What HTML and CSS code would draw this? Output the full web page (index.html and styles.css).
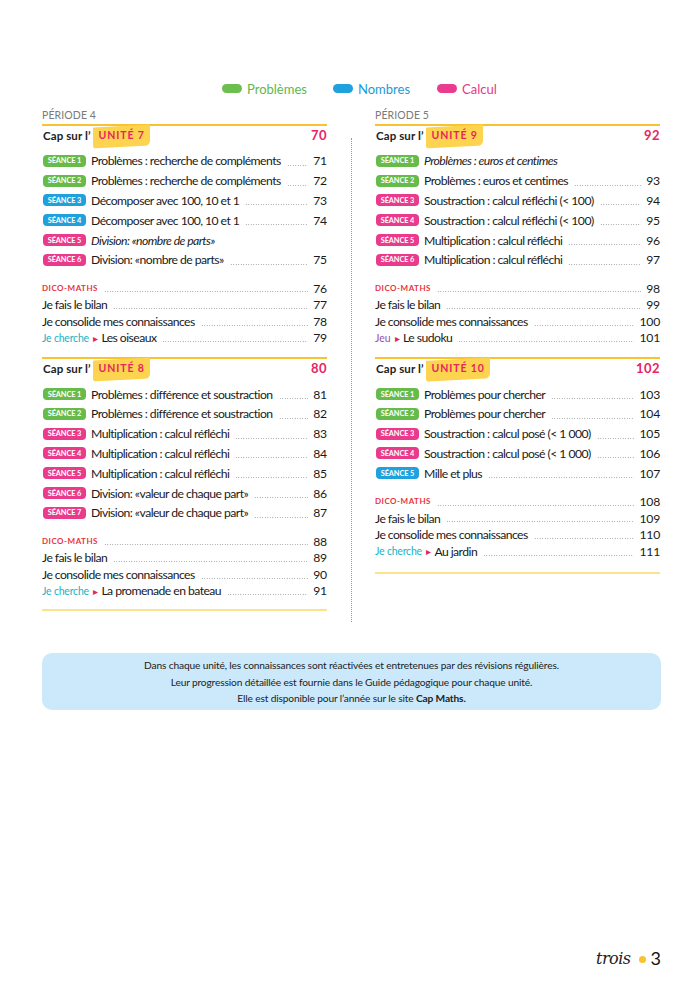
FILE: index.html
```html
<!DOCTYPE html>
<html lang="fr">
<head>
<meta charset="utf-8">
<title>Sommaire</title>
<link rel="stylesheet" href="styles.css">
</head>
<body>
<div class="page">
  <div class="legend">
    <span class="leg leg-green"><i class="pill"></i>Problèmes</span>
    <span class="leg leg-blue"><i class="pill"></i>Nombres</span>
    <span class="leg leg-pink"><i class="pill"></i>Calcul</span>
  </div>

  <div class="columns">
    <div class="col">
      <div class="period">PÉRIODE 4</div>
      <div class="unit">
        <div class="unit-head"><span class="cap">Cap sur l’</span><span class="unit-tag">UNITÉ 7</span><span class="unit-num">70</span></div>
        <ul class="seances">
          <li class="row"><span class="badge green">SÉANCE 1</span><span class="title">Problèmes : recherche de compléments</span><span class="dots"></span><span class="num">71</span></li>
          <li class="row"><span class="badge green">SÉANCE 2</span><span class="title">Problèmes : recherche de compléments</span><span class="dots"></span><span class="num">72</span></li>
          <li class="row"><span class="badge blue">SÉANCE 3</span><span class="title">Décomposer avec 100, 10 et 1</span><span class="dots"></span><span class="num">73</span></li>
          <li class="row"><span class="badge blue">SÉANCE 4</span><span class="title">Décomposer avec 100, 10 et 1</span><span class="dots"></span><span class="num">74</span></li>
          <li class="row"><span class="badge pink">SÉANCE 5</span><span class="title it">Division: «nombre de parts»</span></li>
          <li class="row"><span class="badge pink">SÉANCE 6</span><span class="title">Division: «nombre de parts»</span><span class="dots"></span><span class="num">75</span></li>
        </ul>
        <ul class="extras">
          <li class="row"><span class="dico">DICO-MATHS</span><span class="dots"></span><span class="num">76</span></li>
          <li class="row"><span class="title">Je fais le bilan</span><span class="dots"></span><span class="num">77</span></li>
          <li class="row"><span class="title">Je consolide mes connaissances</span><span class="dots"></span><span class="num">78</span></li>
          <li class="row"><span class="cherche">Je cherche</span><span class="arrow">▸</span><span class="title">Les oiseaux</span><span class="dots"></span><span class="num">79</span></li>
        </ul>
      </div>
      <div class="unit">
        <div class="unit-head"><span class="cap">Cap sur l’</span><span class="unit-tag">UNITÉ 8</span><span class="unit-num">80</span></div>
        <ul class="seances">
          <li class="row"><span class="badge green">SÉANCE 1</span><span class="title">Problèmes : différence et soustraction</span><span class="dots"></span><span class="num">81</span></li>
          <li class="row"><span class="badge green">SÉANCE 2</span><span class="title">Problèmes : différence et soustraction</span><span class="dots"></span><span class="num">82</span></li>
          <li class="row"><span class="badge pink">SÉANCE 3</span><span class="title">Multiplication : calcul réfléchi</span><span class="dots"></span><span class="num">83</span></li>
          <li class="row"><span class="badge pink">SÉANCE 4</span><span class="title">Multiplication : calcul réfléchi</span><span class="dots"></span><span class="num">84</span></li>
          <li class="row"><span class="badge pink">SÉANCE 5</span><span class="title">Multiplication : calcul réfléchi</span><span class="dots"></span><span class="num">85</span></li>
          <li class="row"><span class="badge pink">SÉANCE 6</span><span class="title">Division: «valeur de chaque part»</span><span class="dots"></span><span class="num">86</span></li>
          <li class="row"><span class="badge pink">SÉANCE 7</span><span class="title">Division: «valeur de chaque part»</span><span class="dots"></span><span class="num">87</span></li>
        </ul>
        <ul class="extras">
          <li class="row"><span class="dico">DICO-MATHS</span><span class="dots"></span><span class="num">88</span></li>
          <li class="row"><span class="title">Je fais le bilan</span><span class="dots"></span><span class="num">89</span></li>
          <li class="row"><span class="title">Je consolide mes connaissances</span><span class="dots"></span><span class="num">90</span></li>
          <li class="row"><span class="cherche">Je cherche</span><span class="arrow">▸</span><span class="title">La promenade en bateau</span><span class="dots"></span><span class="num">91</span></li>
        </ul>
      </div>
      <div class="end-line"></div>
    </div>

    <div class="divider"></div>

    <div class="col">
      <div class="period">PÉRIODE 5</div>
      <div class="unit">
        <div class="unit-head"><span class="cap">Cap sur l’</span><span class="unit-tag">UNITÉ 9</span><span class="unit-num">92</span></div>
        <ul class="seances">
          <li class="row"><span class="badge green">SÉANCE 1</span><span class="title it">Problèmes : euros et centimes</span></li>
          <li class="row"><span class="badge green">SÉANCE 2</span><span class="title">Problèmes : euros et centimes</span><span class="dots"></span><span class="num">93</span></li>
          <li class="row"><span class="badge pink">SÉANCE 3</span><span class="title">Soustraction : calcul réfléchi (&lt; 100)</span><span class="dots"></span><span class="num">94</span></li>
          <li class="row"><span class="badge pink">SÉANCE 4</span><span class="title">Soustraction : calcul réfléchi (&lt; 100)</span><span class="dots"></span><span class="num">95</span></li>
          <li class="row"><span class="badge pink">SÉANCE 5</span><span class="title">Multiplication : calcul réfléchi</span><span class="dots"></span><span class="num">96</span></li>
          <li class="row"><span class="badge pink">SÉANCE 6</span><span class="title">Multiplication : calcul réfléchi</span><span class="dots"></span><span class="num">97</span></li>
        </ul>
        <ul class="extras">
          <li class="row"><span class="dico">DICO-MATHS</span><span class="dots"></span><span class="num">98</span></li>
          <li class="row"><span class="title">Je fais le bilan</span><span class="dots"></span><span class="num">99</span></li>
          <li class="row"><span class="title">Je consolide mes connaissances</span><span class="dots"></span><span class="num">100</span></li>
          <li class="row"><span class="jeu">Jeu</span><span class="arrow">▸</span><span class="title">Le sudoku</span><span class="dots"></span><span class="num">101</span></li>
        </ul>
      </div>
      <div class="unit">
        <div class="unit-head"><span class="cap">Cap sur l’</span><span class="unit-tag">UNITÉ 10</span><span class="unit-num">102</span></div>
        <ul class="seances">
          <li class="row"><span class="badge green">SÉANCE 1</span><span class="title">Problèmes pour chercher</span><span class="dots"></span><span class="num">103</span></li>
          <li class="row"><span class="badge green">SÉANCE 2</span><span class="title">Problèmes pour chercher</span><span class="dots"></span><span class="num">104</span></li>
          <li class="row"><span class="badge pink">SÉANCE 3</span><span class="title">Soustraction : calcul posé (&lt; 1 000)</span><span class="dots"></span><span class="num">105</span></li>
          <li class="row"><span class="badge pink">SÉANCE 4</span><span class="title">Soustraction : calcul posé (&lt; 1 000)</span><span class="dots"></span><span class="num">106</span></li>
          <li class="row"><span class="badge blue">SÉANCE 5</span><span class="title">Mille et plus</span><span class="dots"></span><span class="num">107</span></li>
        </ul>
        <ul class="extras">
          <li class="row"><span class="dico">DICO-MATHS</span><span class="dots"></span><span class="num">108</span></li>
          <li class="row"><span class="title">Je fais le bilan</span><span class="dots"></span><span class="num">109</span></li>
          <li class="row"><span class="title">Je consolide mes connaissances</span><span class="dots"></span><span class="num">110</span></li>
          <li class="row"><span class="cherche">Je cherche</span><span class="arrow">▸</span><span class="title">Au jardin</span><span class="dots"></span><span class="num">111</span></li>
        </ul>
      </div>
      <div class="end-line"></div>
    </div>
  </div>

  <div class="info">
    <p>Dans chaque unité, les connaissances sont réactivées et entretenues par des révisions régulières.</p>
    <p>Leur progression détaillée est fournie dans le Guide pédagogique pour chaque unité.</p>
    <p>Elle est disponible pour l’année sur le site <b>Cap Maths.</b></p>
  </div>

  <div class="folio"><span class="word">trois</span><span class="dot"></span><span class="pnum">3</span></div>
</div>
</body>
</html>
```

FILE: styles.css
```css
* { box-sizing: border-box; }
html, body { margin: 0; padding: 0; background: #fff; }
body {
  font-family: "Lato", "Open Sans", sans-serif;
  color: #222;
  width: 700px;
  height: 990px;
  overflow: hidden;
}
.page { padding: 81px 0 0 0; }

.legend {
  display: flex;
  justify-content: flex-start;
  padding-left: 222px;
  height: 15px;
  align-items: center;
  font-size: 13px;
}
.leg { display: inline-flex; align-items: center; }
.leg .pill {
  display: inline-block;
  width: 20px;
  height: 9px;
  border-radius: 5px;
  margin-right: 5px;
}
.leg-green { color: #5fb84a; width: 111px; }
.leg-green .pill { background: #6cbf4f; }
.leg-blue { color: #1a9ad8; width: 104px; }
.leg-blue .pill { background: #1ea1dc; }
.leg-pink { color: #e8358b; }
.leg-pink .pill { background: #ea3c8e; }

.columns {
  display: grid;
  grid-template-columns: 285px 48px 285px;
  align-items: start;
  padding-left: 42px;
  margin-top: 12px;
}
.divider {
  margin: 30px auto 0;
  width: 0;
  height: 484px;
  border-left: 1px dotted #9a9a9a;
}
.period {
  font-size: 10.5px;
  line-height: 14px;
  color: #7a7a7a;
  letter-spacing: 0.1px;
  margin-bottom: 2px;
}
.unit + .unit { margin-top: 11px; }
.unit-head {
  border-top: 2px solid #f9c22e;
  height: 20px;
  display: flex;
  align-items: center;
  font-size: 11.5px;
  font-weight: 700;
}
.cap { color: #222; margin-left: 1px; letter-spacing: 0.1px; }
.unit-tag {
  position: relative;
  color: #e8245f;
  font-size: 10.5px;
  letter-spacing: 0.9px;
  padding: 0 5px 0 6px;
  margin-left: 2px;
  z-index: 0;
}
.unit-tag::before {
  content: "";
  position: absolute;
  left: 0; right: 0;
  top: -3px; bottom: -6px;
  background: #fcd44f;
  border-radius: 1px 1px 5px 3px;
  transform: skewY(-3deg);
  z-index: -1;
}
.unit-num {
  margin-left: auto;
  color: #e8245f;
  font-size: 13px;
  letter-spacing: 0.5px;
}

ul { list-style: none; margin: 0; padding: 0; }
.seances { padding-top: 7px; }
.seances .row { height: 19.8px; }
.extras { margin-top: 10px; }
.extras .row { height: 16.6px; }

.row {
  display: flex;
  align-items: center;
  font-size: 12.2px;
  letter-spacing: -0.55px;
  color: #1a1a1a;
}
.badge {
  flex: none;
  width: 43px;
  height: 12px;
  border-radius: 4px;
  color: #fff;
  font-size: 7.4px;
  font-weight: 700;
  letter-spacing: -0.1px;
  display: flex;
  align-items: center;
  justify-content: center;
  margin: 0 5px 0 1px;
}
.badge.green { background: #66bb4a; }
.badge.blue { background: #1ea1dc; }
.badge.pink { background: #ea3a8c; }
.title { white-space: nowrap; }
.title.it { font-style: italic; }
.dots {
  flex: 1;
  align-self: flex-end;
  margin: 0 5px 5px 6px;
  height: 1px;
  background-image: radial-gradient(circle, #999 0.5px, transparent 0.7px);
  background-size: 2.5px 1px;
  background-repeat: repeat-x;
}
.extras .dots { margin-bottom: 4px; }
.num { flex: none; text-align: right; letter-spacing: -0.2px; }
.dico {
  color: #e8323c;
  font-size: 8px;
  font-weight: 700;
  letter-spacing: 0.5px;
  white-space: nowrap;
}
.cherche { color: #20b3c6; font-size: 10.5px; white-space: nowrap; letter-spacing: -0.2px; }
.jeu { color: #9b4fa8; font-size: 10.5px; letter-spacing: 0; }
.arrow { color: #e8245f; font-size: 10px; margin: 0 4px 0 4px; }

.end-line {
  margin-top: 10px;
  height: 2px;
  background: #fce28a;
}
.col:last-child .end-line { margin-top: 12px; }

.info {
  margin: 31px 39px 0 42px;
  background: #cbe9fa;
  border-radius: 10px;
  padding: 4px 0 3px;
  text-align: center;
  font-size: 10.2px;
  letter-spacing: -0.15px;
  line-height: 16.6px;
  color: #222;
}
.info p { margin: 0; }
.info b { font-weight: 700; }

.folio {
  position: absolute;
  left: 596px;
  top: 947px;
  display: flex;
  align-items: center;
  height: 22px;
}
.word {
  font-family: "DejaVu Serif", serif;
  font-style: italic;
  font-size: 16px;
  color: #222;
  letter-spacing: -0.5px;
}
.dot {
  width: 7px; height: 7px;
  border-radius: 50%;
  background: #f9c22e;
  margin: 2px 5px 0 8px;
}
.pnum {
  font-family: "Lato", sans-serif;
  font-size: 18px;
  font-weight: 400;
  color: #111;
}
```
